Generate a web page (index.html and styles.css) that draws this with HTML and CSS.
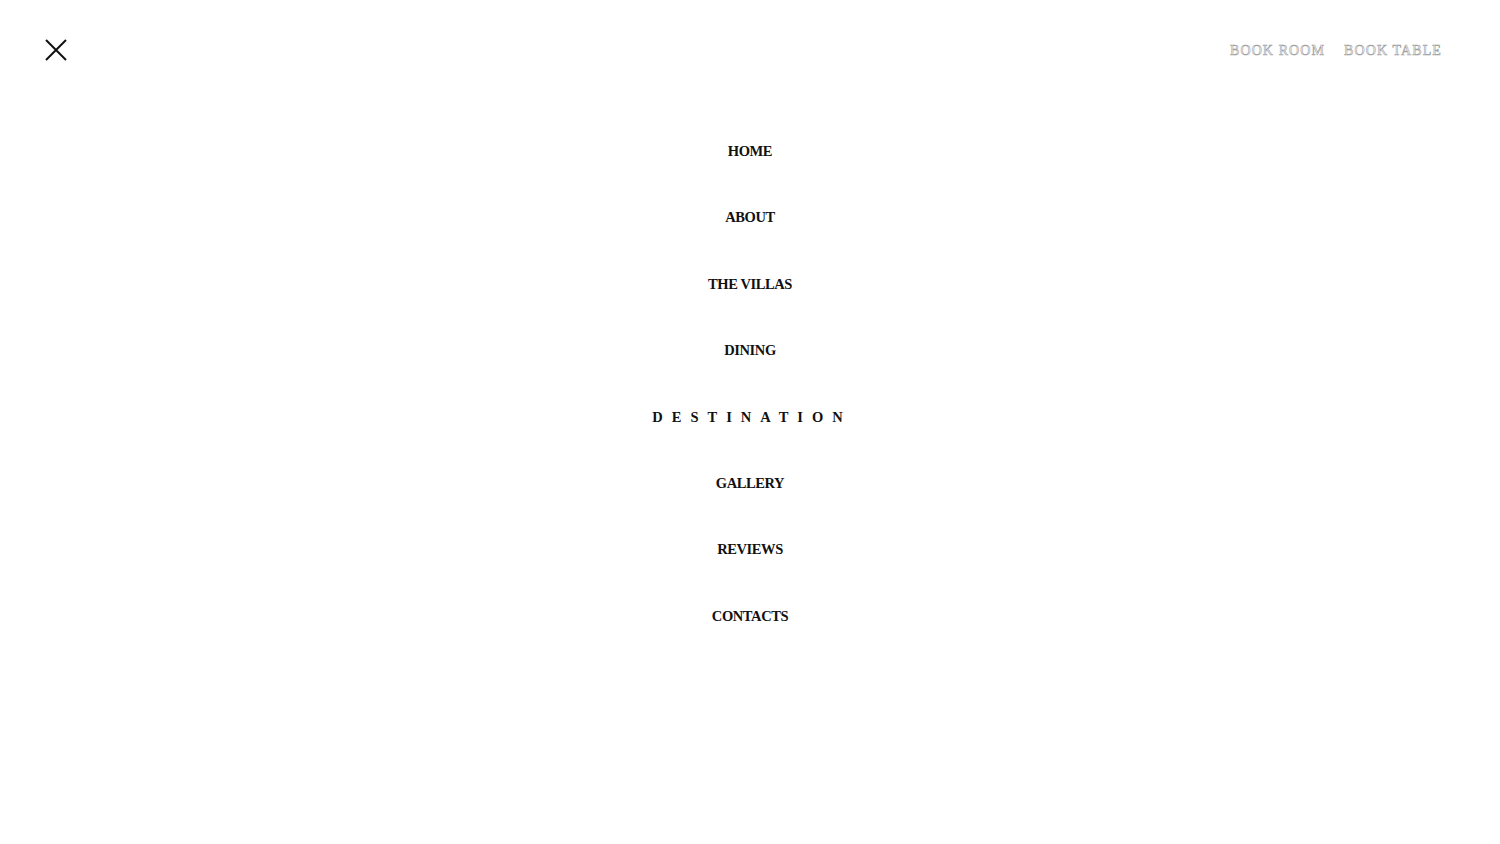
FILE: index.html
```html
<!DOCTYPE html>
<html lang="en">
<head>
<meta charset="utf-8">
<title>Menu</title>
<link rel="stylesheet" href="styles.css">
</head>
<body>
<header class="topbar">
  <button class="close" aria-label="Close menu">
    <svg width="24" height="24" viewBox="0 0 24 24"><path d="M2 2 L22 22 M22 2 L2 22" stroke="#111" stroke-width="2" fill="none"/></svg>
  </button>
  <div class="book-links">
    <a class="book" href="#">BOOK ROOM</a>
    <a class="book" href="#">BOOK TABLE</a>
  </div>
</header>
<nav class="menu">
  <a class="item" href="#">HOME</a>
  <a class="item" href="#">ABOUT</a>
  <a class="item" href="#">THE VILLAS</a>
  <a class="item" href="#">DINING</a>
  <a class="item active" href="#">DESTINATION</a>
  <a class="item" href="#">GALLERY</a>
  <a class="item" href="#">REVIEWS</a>
  <a class="item" href="#">CONTACTS</a>
</nav>
</body>
</html>
```
FILE: styles.css
```css
html, body {
  margin: 0;
  padding: 0;
  background: #fff;
  font-family: "Liberation Serif", "Times New Roman", serif;
}
.topbar {
  height: 100px;
  display: flex;
  align-items: center;
  justify-content: space-between;
  padding: 0 58px 0 44px;
}
.close {
  background: none;
  border: 0;
  padding: 0;
  width: 24px;
  height: 24px;
  display: flex;
  cursor: pointer;
}
.book-links {
  display: flex;
  gap: 19px;
  padding-top: 1px;
}
.book {
  font-size: 14px;
  letter-spacing: 1.1px;
  color: #fff;
  -webkit-text-stroke: 0.6px #a0a0a0;
  text-decoration: none;
  line-height: 20px;
}
.menu {
  display: flex;
  flex-direction: column;
  align-items: center;
  gap: 46.4px;
  padding-top: 41px;
}
.item {
  font-size: 14.5px;
  font-weight: bold;
  line-height: 20px;
  letter-spacing: -0.4px;
  color: #111;
  text-decoration: none;
}
.item.active {
  letter-spacing: 9px;
  padding-left: 4px;
  font-size: 14.5px;
}
```
